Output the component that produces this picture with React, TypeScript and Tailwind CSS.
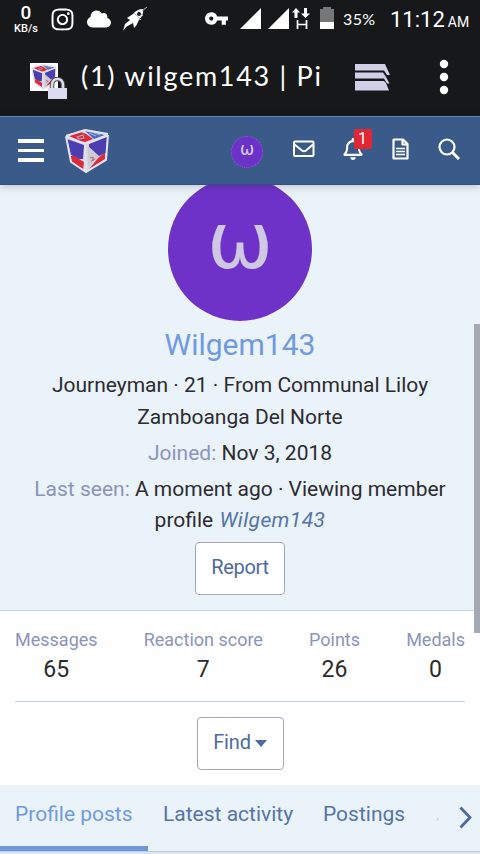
import { FaCloud, FaInstagram, FaRegBell } from "react-icons/fa";
import { MdVpnKey } from "react-icons/md";

const stats = [
  { label: "Messages", value: "65" },
  { label: "Reaction score", value: "7" },
  { label: "Points", value: "26" },
  { label: "Medals", value: "0" },
];

const CubeLogo = ({ className }: { className: string }) => (
  <svg className={className} viewBox="0 0 44 45" fill="none">
    <path d="M1 6L20 1L43 5L41 31L21 44L6 33Z" fill="#d6d6e4" />
    <path d="M3 7L16 3L21 5L28 10L20 13L15 12Z" fill="#dc2a38" />
    <path d="M20 2L40 6L29 10Z" fill="#4868c8" />
    <path d="M12 8L18 6L19 9L14 10ZM24 4L31 7M29 4L35 6" stroke="#b0a8c8" strokeWidth="1.1" />
    <path d="M2 10L19 16L18 30L14 30L6 26Z" fill="#4c3db0" />
    <path d="M5 27L9 27L19 33L18 41L7 33Z" fill="#dc2a38" />
    <path d="M24 15L42 8L41 24L34 27L24 18Z" fill="#4c3db0" />
    <path d="M24 40L34 28L40 24L40 30Z" fill="#dc2a38" />
    <path d="M23 18L34 28L23 38Z" fill="#cbcbd8" />
    <path d="M25 29L28 28M26 32L30 30M28 28L28 32" stroke="#bd7080" strokeWidth="1.2" />
    <path d="M1 7L20 15L43 6M20 15L21 43M1 7L6 33L21 43L41 31L43 6M1 7L20 1L43 5" stroke="#e2e2ee" strokeWidth="2" strokeLinejoin="round" />
  </svg>
);

const StatusBar = () => (
  <div className="h-10 flex text-white">
    <div className="w-[26px] ml-[13px] mt-[5px] text-center whitespace-nowrap">
      <div className="h-[16px] text-[19px] leading-[16px] font-medium">0</div>
      <div className="mt-[2px] text-[11px] leading-[11px] font-medium -mx-2">KB/s</div>
    </div>
    <FaInstagram className="w-[25px] h-[25px] ml-[11px] mt-[7px]" />
    <FaCloud className="w-[24px] h-[24px] ml-[12px] mt-[7px]" />
    <svg className="w-[26px] h-[26px] ml-[11px] mt-[6px]" viewBox="0 0 26 26" fill="none">
      <path d="M5 12L11 8Q15 3 21 3Q22 9 17 14L14 20L12 22L11 17L4 21L1 25L3 18L8 14Z" fill="#fff" />
      <path d="M12 7L19 14M15 4L21 10M20 5L25 1" stroke="#bbb" />
      <circle cx="17" cy="8" r="2" fill="#1b1c1e" />
    </svg>
    <MdVpnKey className="w-[25px] h-[25px] ml-[56px] mt-[6px]" />
    <svg className="w-[104px] h-[24px] ml-[11px] mt-[7px]" viewBox="0 0 104 24" fill="none">
      <path d="M0 22L21 1V22ZM28 22L49 1V22Z" fill="#fff" />
      <path d="M52 5.500L56 1L60 5.500H57.500V11H54.500V5.500ZM61 6.500L65.500 11L70 6.500H67V1H64V6.500Z" fill="#fff" />
      <path d="M57.500 13V22M66.500 13V22M57.500 17.500H66.500" stroke="#fff" strokeWidth="1.700" />
      <path d="M80 2H83V0H91V2H94V22H80Z" fill="#777" />
      <path d="M80 15H94V22H80Z" fill="#fff" />
    </svg>
    <div className="w-[34px] ml-[-1px] mt-[9px] font-['Lato'] text-[16px] leading-5 tracking-[0.4px] whitespace-nowrap">35%</div>
    <div className="ml-[13px] mt-[8px] whitespace-nowrap leading-6 text-[22px]">
      11:12<span className="text-[14px] ml-[3px]">AM</span>
    </div>
  </div>
);

const BrowserBar = () => (
  <div className="h-[76px] flex text-white">
    <div className="relative w-[28px] h-[28px] ml-[30px] mt-[23px] bg-white">
      <CubeLogo className="w-[28px] h-[26px] mt-px" />
      <svg className="absolute left-[17px] top-[14px] w-[21px] h-[22px]" viewBox="0 0 21 22" fill="none">
        <path d="M5 12V8C5 0 16 0 16 8V12" stroke="#4b4b52" strokeWidth="4.500" />
        <path d="M5 12V8C5 0 16 0 16 8V12" stroke="#dedeea" strokeWidth="2.500" />
        <path d="M1 11H20V22H1Z" fill="#dcdcf0" />
      </svg>
    </div>
    <div className="w-[241px] ml-[23px] mt-[18px] font-['Lato'] text-[27px] leading-9 tracking-[1.700px] whitespace-nowrap">
      (1) wilgem143 | Pi
    </div>
    <svg className="w-[36px] h-[28px] ml-[33px] mt-[23px]" viewBox="0 0 36 28" fill="#cfcfe8">
      <path d="M0 1H30L35 12H32L29 7.500H0ZM0 9.500H28L31 14L34.500 20.500H32L29 15.500H0ZM0 18H29L31 20L34 27.500H0Z" />
    </svg>
    <svg className="w-[10px] h-[36px] ml-[48px] mt-[19px]" viewBox="0 0 10 36" fill="#fff">
      <circle cx="5" cy="5" r="4.200" />
      <circle cx="5" cy="18" r="4.200" />
      <circle cx="5" cy="31" r="4.200" />
    </svg>
  </div>
);

const NavBar = () => (
  <div className="relative z-10 h-[69px] flex bg-[#3a5a89] border-t border-[#6c80ae] border-b border-b-[#35517e] shadow-[0_1px_8px_rgba(20,30,50,0.25)] text-white">
    <div className="w-[26px] ml-[18px] mt-[22px] flex flex-col gap-[6px]">
      <div className="h-[3.500px] bg-white" />
      <div className="h-[3.500px] bg-white" />
      <div className="h-[3.500px] bg-white" />
    </div>
    <CubeLogo className="w-[44px] h-[45px] ml-[21px] mt-[12px]" />
    <div className="w-[32px] h-[32px] ml-[122px] mt-[19px] rounded-full bg-[#6c32c8] border border-dotted border-[#8f66c8] text-center font-['DejaVu_Sans'] text-[17px] leading-[25px] text-[#d5cde8]">ω</div>
    <svg className="w-[22px] h-[18px] ml-[30px] mt-[23px]" viewBox="0 0 22 18" fill="none" stroke="#fff" strokeWidth="2">
      <rect x="1" y="1.500" width="19.500" height="14.500" rx="1" />
      <path d="M1.500 4.500L9 10.500Q11 12 13 10.500L20 4.500" />
    </svg>
    <div className="relative ml-[28px] mt-[21px] w-[20px] h-[24px]">
      <FaRegBell className="w-[20px] h-[22px]" />
      <span className="absolute left-[11px] top-[-9px] w-[18px] h-[20px] rounded-[2px] bg-[#e02834] text-center text-[16px] leading-[19px] pr-px">1</span>
    </div>
    <svg className="w-[17px] h-[22px] ml-[29px] mt-[21px]" viewBox="0 0 17 22" fill="none" stroke="#fff" strokeWidth="2.200">
      <path d="M2 1.500H11L15.500 6V20.500H1.500V2ZM10.500 2V6.500H15" strokeLinejoin="round" />
      <path d="M4 10.500H13M4 13.500H13M4 16.500H13" strokeWidth="1.500" />
    </svg>
    <svg className="w-[22px] h-[22px] ml-[29px] mt-[21px]" viewBox="0 0 22 22" fill="none" stroke="#fff" strokeWidth="2.200">
      <circle cx="9" cy="9" r="7.500" />
      <path d="M14.500 14.500L21 21" strokeWidth="3" />
    </svg>
  </div>
);

const MemberHeader = () => (
  <div className="h-[426px] bg-[#ebf3fa] border-b border-[#c5d3df] flex flex-col items-center text-center text-[21px] text-[#2b2b30] whitespace-nowrap">
    <div className="w-[144px] h-[144px] shrink-0 mt-[-8px] rounded-full bg-[#6f32c8] font-['DejaVu_Sans'] text-[79px] leading-[129px] text-[#cfc8e4]">ω</div>
    <div className="h-[44px] mt-[2px] text-[30px] leading-[44px] text-[#719ade]">Wilgem143</div>
    <div className="h-[64px] mt-[2px] leading-[32px]">
      <div>Journeyman · 21 · From Communal Liloy</div>
      <div>Zamboanga Del Norte</div>
    </div>
    <div className="h-[32px] mt-[4px] leading-[32px]"><span className="text-[#8c94bb]">Joined:</span> Nov 3, 2018</div>
    <div className="h-[63px] mt-[5px] leading-[31px]">
      <div><span className="text-[#8c94bb]">Last seen:</span> A moment ago · Viewing member</div>
      <div>profile <i className="ml-px text-[#5574a8] tracking-[0.4px]">Wilgem143</i></div>
    </div>
    <button className="w-[90px] h-[53px] mt-[5px] pb-[3px] rounded-[4px] border border-[#a5a5b8] bg-white text-[20px] tracking-[-0.3px] text-[#4d6a9e]">Report</button>
  </div>
);

const Stats = () => (
  <div className="h-[174px] bg-[#fefefe] px-[15px] flex flex-col items-center">
    <div className="w-full h-[91px] pt-[14px] flex justify-between border-b border-[#c0d1dc]">
      {stats.map((s) => (
        <div key={s.label} className="text-center whitespace-nowrap">
          <div className="text-[18px] leading-[30px] text-[#8c94bb]">{s.label}</div>
          <div className="text-[23px] leading-[30px] text-[#2b2b2b]">{s.value}</div>
        </div>
      ))}
    </div>
    <button className="w-[87px] h-[53px] mt-[15px] pb-[3px] rounded-[4px] border border-[#a5a5b8] bg-white flex items-center justify-center gap-[4px] text-[20px] tracking-[-0.2px] text-[#4d6a9e]">
      Find
      <svg className="w-[12px] h-[7px] mt-[3px]" viewBox="0 0 12 7" fill="#4d6a9e"><path d="M0 0H12L6 7Z" /></svg>
    </button>
  </div>
);

const Tabs = () => (
  <div className="relative h-[69px] bg-[#ebf3fa] flex text-[21px] leading-[58px] text-[#5574a8] whitespace-nowrap">
    <div className="w-[148px] h-[66px] pl-[15px] border-b-[5px] border-[#7297d8] text-[#719ade]">Profile posts</div>
    <div className="w-[160px] pl-[15px]">Latest activity</div>
    <div className="w-[112px] pl-[15px]">Postings</div>
    <svg className="w-[13px] h-[23px] ml-[39px] mt-[21px]" viewBox="0 0 13 23" fill="none" stroke="#4d6a9e" strokeWidth="2.800">
      <path d="M1.500 1.500L11 11.500L1.500 21.500" />
    </svg>
    <div className="absolute left-0 bottom-0 w-full h-[3px] border-t border-[#bdcadb] bg-[#dce4ed]" />
    <div className="absolute left-[436px] top-[34px] w-[3px] h-px -rotate-60 bg-[#bbcbe0]" />
  </div>
);

const App = () => (
  <div className="relative w-[480px] h-[854px] overflow-hidden bg-[#17181a] font-['Roboto',sans-serif]">
    <StatusBar />
    <BrowserBar />
    <NavBar />
    <MemberHeader />
    <Stats />
    <Tabs />
    <div className="absolute right-0 top-[324px] w-[6px] h-[309px] bg-[#a4a9b3]" />
  </div>
);

export default App;
